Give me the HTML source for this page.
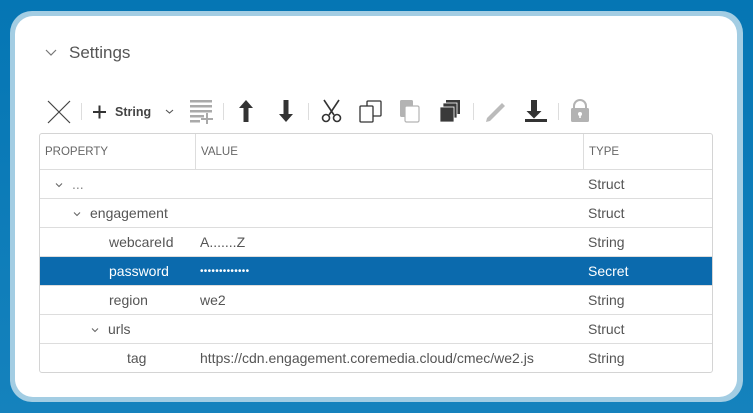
<!DOCTYPE html>
<html><head><meta charset="utf-8"><style>
*{margin:0;padding:0;box-sizing:border-box}
html,body{width:753px;height:413px;overflow:hidden}
body{background:linear-gradient(180deg,#0576b4,#1582bd);font-family:"Liberation Sans",sans-serif;position:relative}
.card{position:absolute;left:10px;top:11px;width:733px;height:391px;background:#a3cde3;border-radius:22px}
.inner{position:absolute;left:15px;top:16px;width:722px;height:381px;background:#fff;border-radius:18px}
.title{position:absolute;left:69px;top:43px;font-size:17px;color:#555}
.chev{position:absolute;left:45px;top:49px}
table{position:absolute;left:39px;top:133px;width:674px;border:1px solid #d4d4d4;border-collapse:separate;border-spacing:0;border-radius:3px;font-size:14px;color:#555}
td,th{height:29px;border-top:1px solid #ddd;padding:0;vertical-align:middle}
th{height:35px;border-top:none;font-weight:normal;font-size:11.5px;text-align:left;padding-left:5px;color:#666}
th+th{border-left:1px solid #ddd}
tr.sel td{background:#0b6aad;color:#fff}
.v{padding-left:5px}
.c{display:inline-block;width:8px;height:6px;margin-right:9px;vertical-align:middle}
</style></head><body>
<div class="card"></div><div class="inner"></div>
<svg class="chev" width="12" height="8"><path d="M1 1l5 5 5-5" fill="none" stroke="#777" stroke-width="1.2"/></svg>
<div class="title">Settings</div>
<svg style="position:absolute;left:0;top:0" width="753" height="130">
<g stroke="#444" stroke-width="1.2"><path d="M48 101l22 22M70 101l-22 22"/></g>
<rect x="81" y="103" width="1" height="17" fill="#ddd"/>
<path d="M93 112h13M99.5 105.5v13" stroke="#333" stroke-width="2"/>
<text x="115" y="116" font-family="Liberation Sans" font-weight="bold" font-size="12.5" fill="#444">String</text>
<path d="M166 110l3.5 3 3.5-3" fill="none" stroke="#555" stroke-width="1.1"/>
<g fill="#aaa"><rect x="190" y="100" width="22" height="2.5"/><rect x="190" y="105" width="22" height="2.5"/><rect x="190" y="110" width="22" height="2.5"/><rect x="190" y="115" width="14" height="2.5"/><rect x="190" y="120" width="10" height="2.5"/><rect x="201" y="118" width="12" height="2"/><rect x="206" y="113" width="2" height="11"/></g>
<rect x="223" y="103" width="1" height="17" fill="#ddd"/>
<path d="M246 100l-7 8h4.5v14h5v-14h4.5z" fill="#333"/>
<path d="M286 122l-7-8h4.5v-14h5v14h4.5z" fill="#333"/>
<rect x="308" y="103" width="1" height="17" fill="#ddd"/>
<g fill="none" stroke="#333" stroke-width="1.6"><path d="M324 100l10 15M339 100l-10 15"/><circle cx="326" cy="118" r="3.5"/><circle cx="337" cy="118" r="3.5"/></g>
<g fill="#fff" stroke="#333" stroke-width="1.3"><rect x="367" y="101" width="14" height="15" rx="1"/><rect x="360" y="106" width="13" height="16" rx="1"/></g>
<rect x="400" y="100" width="13" height="17" rx="1.5" fill="#b3b3b3"/><rect x="405" y="106" width="14" height="16" rx="1.5" fill="#fff" stroke="#b3b3b3" stroke-width="1.2"/>
<g fill="#3a3a3a"><rect x="446" y="100" width="14" height="14"/><rect x="443" y="103" width="14" height="15" stroke="#fff" stroke-width="0.8"/><rect x="440" y="107" width="14" height="15" stroke="#fff" stroke-width="0.8"/></g>
<rect x="473" y="103" width="1" height="17" fill="#ddd"/>
<path d="M487 118l15-15 3 3-15 15-4 1z" fill="#bbb"/>
<path d="M537 100v11h4.5l-7.5 7.5-7.5-7.5h4.5v-11z" fill="#333"/><rect x="525" y="119" width="22" height="3" fill="#333"/>
<rect x="558" y="103" width="1" height="17" fill="#ddd"/>
<path d="M574 109v-3a6 6 0 0 1 12 0v3" fill="none" stroke="#b3b3b3" stroke-width="2"/><rect x="571" y="108" width="18" height="14" rx="1.5" fill="#b3b3b3"/><circle cx="580" cy="114" r="2" fill="#fff"/><rect x="579.2" y="114" width="1.6" height="4" fill="#fff"/>
</svg>
<table>
<tr><th style="width:155px">PROPERTY</th><th style="width:388px">VALUE</th><th>TYPE</th></tr>
<tr><td style="padding-left:15px"><svg class="c"><path d="M1 1.5l3 3 3-3" fill="none" stroke="#666" stroke-width="1.1"/></svg><span style="color:#888">...</span></td><td></td><td class="v">Struct</td></tr>
<tr><td style="padding-left:33px"><svg class="c"><path d="M1 1.5l3 3 3-3" fill="none" stroke="#666" stroke-width="1.1"/></svg>engagement</td><td></td><td class="v">Struct</td></tr>
<tr><td style="padding-left:69px">webcareId</td><td class="v">A.......Z</td><td class="v">String</td></tr>
<tr class="sel"><td style="padding-left:69px">password</td><td class="v" style="font-size:10px;letter-spacing:0.3px">•••••••••••••</td><td class="v">Secret</td></tr>
<tr><td style="padding-left:69px">region</td><td class="v">we2</td><td class="v">String</td></tr>
<tr><td style="padding-left:51px"><svg class="c"><path d="M1 1.5l3 3 3-3" fill="none" stroke="#666" stroke-width="1.1"/></svg>urls</td><td></td><td class="v">Struct</td></tr>
<tr><td style="padding-left:87px">tag</td><td class="v">https://cdn.engagement.coremedia.cloud/cmec/we2.js</td><td class="v">String</td></tr>
</table>
</body></html>
